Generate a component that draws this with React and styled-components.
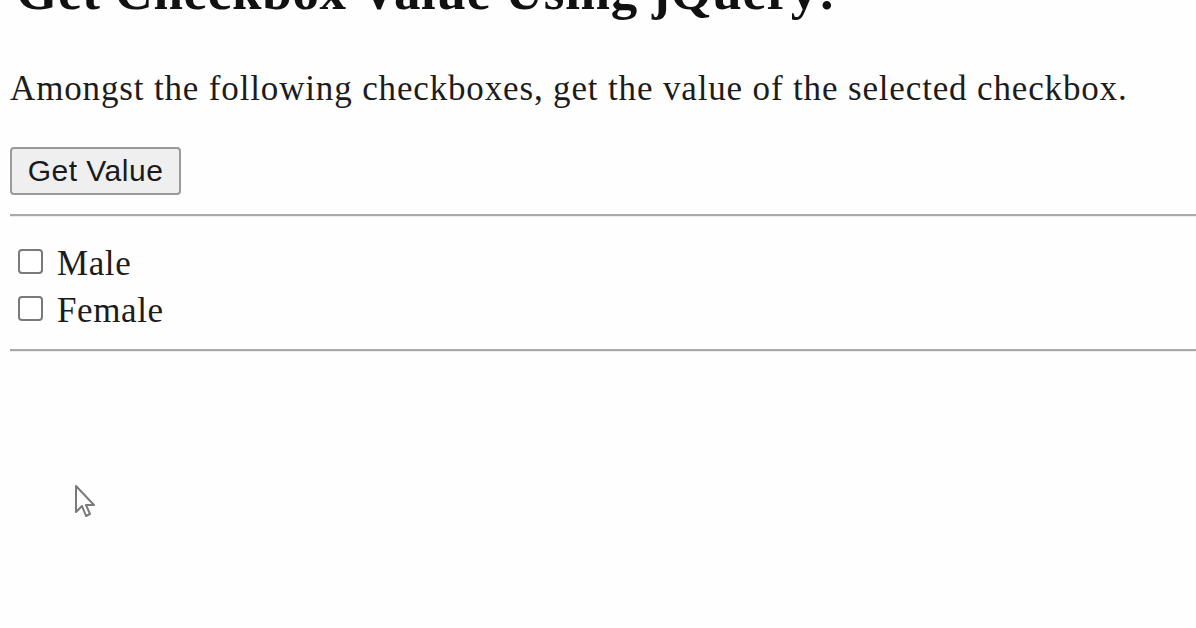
import React from "react";
import styled, { createGlobalStyle } from "styled-components";

const Global = createGlobalStyle`
  html, body {
    margin: 0;
    padding: 0;
    background: #fefefe;
  }
  body {
    width: 1196px;
    height: 628px;
    overflow: hidden;
  }
`;

const Page = styled.main`
  position: relative;
  display: flex;
  flex-direction: column;
  padding-left: 10px;
  height: 628px;
  font-family: "Liberation Serif", "Times New Roman", serif;
  color: #1c1c1c;
`;

const Title = styled.h2`
  margin: -35px 0 0 6px;
  font-size: 53px;
  line-height: 53px;
  font-weight: 700;
  letter-spacing: 0.7px;
  color: #111;
  white-space: nowrap;
`;

const Lead = styled.p`
  margin: 54px 0 0 0;
  font-size: 35px;
  line-height: 34px;
  letter-spacing: 0.85px;
  white-space: nowrap;
`;

const Button = styled.button`
  margin-top: 41px;
  align-self: flex-start;
  width: 171px;
  height: 48px;
  padding: 0;
  background: #efefef;
  border: 2px solid #9a9a9a;
  border-radius: 4px;
  font-family: "Liberation Sans", Arial, sans-serif;
  font-size: 30px;
  letter-spacing: 0.5px;
  color: #1a1a1a;
`;

const Rule = styled.hr`
  margin: ${(p) => p.$top}px 0 0 0;
  border: none;
  border-top: 2px solid #a9a9a9;
  border-bottom: 1px solid #ececec;
  height: 0;
`;

const Options = styled.div`
  display: flex;
  flex-direction: column;
  margin-top: 30px;
  padding-left: 8px;
  gap: 13px;
`;

const Option = styled.label`
  display: flex;
  align-items: center;
  gap: 14px;
  font-size: 35px;
  line-height: 34px;
  letter-spacing: 0.6px;
`;

const Box = styled.span`
  width: 21px;
  height: 21px;
  border: 2px solid #7a7a7a;
  border-radius: 4px;
  background: #fff;
  margin-top: -6px;
  flex: none;
`;

const Pointer = styled.svg`
  position: absolute;
  left: 73px;
  top: 484px;
  width: 24px;
  height: 36px;
  filter: blur(0.6px);
`;

export default function App() {
  return (
    <>
      <Global />
      <Page>
        <Title>Get Checkbox Value Using jQuery!</Title>
        <Lead>Amongst the following checkboxes, get the value of the selected checkbox.</Lead>
        <Button type="button">Get Value</Button>
        <Rule $top={19} />
        <Options>
          <Option>
            <Box />
            Male
          </Option>
          <Option>
            <Box />
            Female
          </Option>
        </Options>
        <Rule $top={21} />
        <Pointer viewBox="0 0 24 36">
          <path
            d="M3 2 L3 28 L9 22 L13 32 L17 30 L13 21 L21 21 Z"
            fill="#fff"
            stroke="#7a7a7a"
            strokeWidth="2"
            strokeLinejoin="round"
          />
        </Pointer>
      </Page>
    </>
  );
}
